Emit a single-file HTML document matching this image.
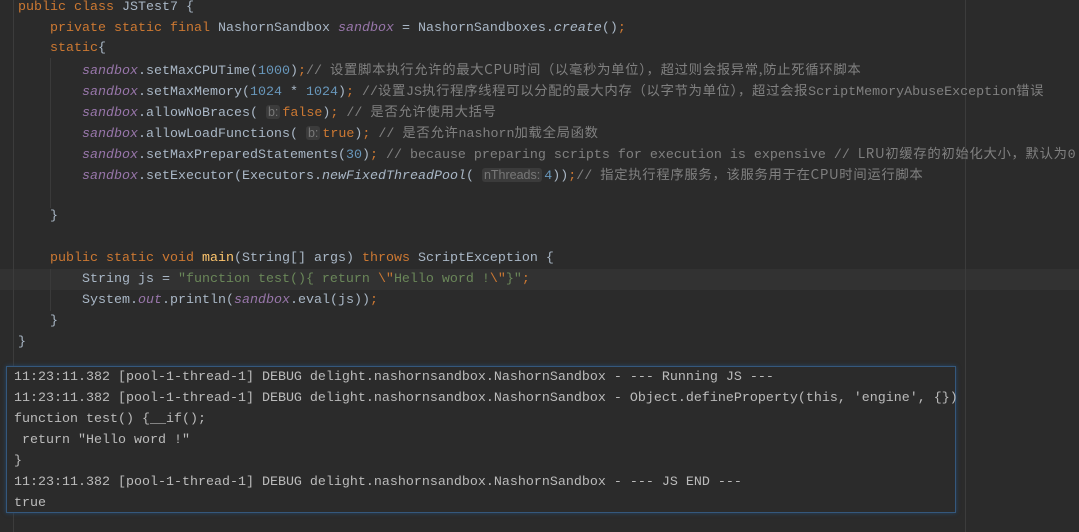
<!DOCTYPE html>
<html><head><meta charset="utf-8"><style>
html,body{margin:0;padding:0;width:1079px;height:532px;overflow:hidden;background:#2b2b2b;}
body{position:relative;font-family:"Liberation Mono","Noto Sans CJK SC",monospace;font-size:13.33px;color:#a9b7c6;}
.l{position:absolute;left:18px;height:21px;line-height:21px;white-space:pre;}
.k{color:#cc7832}.f{color:#9876aa;font-style:italic}.n{color:#6897bb}.c{color:#808080}.s{color:#6a8759}.m{color:#ffc66d}.i{font-style:italic}
.h{background:#3b3b3b;color:#787878;border-radius:3px;padding:0 2px;font-family:"Liberation Sans",sans-serif;font-size:12.5px;margin-right:2px;line-height:14px;display:inline-block}
.zh{font-family:"Noto Sans CJK SC",sans-serif;letter-spacing:0.7px;line-height:10px;}
.cur{position:absolute;left:0;top:269px;width:1079px;height:21px;background:#323232;}
.g{position:absolute;width:1px;background:#3a3a3a;}
.con{position:absolute;left:6px;top:366px;width:948px;height:145px;background:#2b2b2b;border:1px solid #35587c;box-shadow:0 0 4px #24496e;}
.cl{position:absolute;left:7px;height:21px;line-height:21px;white-space:pre;color:#bbbbbb;}
</style></head><body>
<div class="cur"></div>
<div class="g" style="left:13px;top:0;height:532px;background:#3c3c3c"></div>
<div class="g" style="left:965px;top:0;height:532px;background:#3c3c3c"></div>
<div class="g" style="left:50px;top:58px;height:150px"></div>
<div class="g" style="left:50px;top:269px;height:42px"></div>
<div class="l" style="top:-3px"><span class="k">public class </span>JSTest7 {</div>
<div class="l" style="top:18px">    <span class="k">private static final </span>NashornSandbox <span class="f">sandbox</span> = NashornSandboxes.<span class="i">create</span>()<span class="k">;</span></div>
<div class="l" style="top:38px">    <span class="k">static</span>{</div>
<div class="l" style="top:61px">        <span class="f">sandbox</span>.setMaxCPUTime(<span class="n">1000</span>)<span class="k">;</span><span class="c">// <span class="zh">设置脚本执行允许的最大CPU时间（以毫秒为单位），超过则会报异常,防止死循环脚本</span></span></div>
<div class="l" style="top:82px">        <span class="f">sandbox</span>.setMaxMemory(<span class="n">1024</span> * <span class="n">1024</span>)<span class="k">;</span> <span class="c">//<span class="zh">设置</span>JS<span class="zh">执行程序线程可以分配的最大内存（以字节为单位），超过会报</span>ScriptMemoryAbuseException<span class="zh">错误</span></span></div>
<div class="l" style="top:103px">        <span class="f">sandbox</span>.allowNoBraces( <span class="h">b:</span><span class="k">false</span>)<span class="k">;</span> <span class="c">// <span class="zh">是否允许使用大括号</span></span></div>
<div class="l" style="top:124px">        <span class="f">sandbox</span>.allowLoadFunctions( <span class="h">b:</span><span class="k">true</span>)<span class="k">;</span> <span class="c">// <span class="zh">是否允许</span>nashorn<span class="zh">加载全局函数</span></span></div>
<div class="l" style="top:145px">        <span class="f">sandbox</span>.setMaxPreparedStatements(<span class="n">30</span>)<span class="k">;</span> <span class="c">// because preparing scripts for execution is expensive // <span class="zh">LRU初缓存的初始化大小，默认为</span>0</span></div>
<div class="l" style="top:166px">        <span class="f">sandbox</span>.setExecutor(Executors.<span class="i">newFixedThreadPool</span>( <span class="h">nThreads:</span><span class="n">4</span>))<span class="k">;</span><span class="c">// <span class="zh">指定执行程序服务，该服务用于在CPU时间运行脚本</span></span></div>
<div class="l" style="top:206px">    }</div>
<div class="l" style="top:248px">    <span class="k">public static void </span><span class="m">main</span>(String[] args) <span class="k">throws </span>ScriptException {</div>
<div class="l" style="top:269px">        String js = <span class="s">"function test(){ return <span class="k">\"</span>Hello word !<span class="k">\"</span>}"</span><span class="k">;</span></div>
<div class="l" style="top:290px">        System.<span class="f">out</span>.println(<span class="f">sandbox</span>.eval(js))<span class="k">;</span></div>
<div class="l" style="top:311px">    }</div>
<div class="l" style="top:332px">}</div>
<div class="con">
<div class="cl" style="top:0px">11:23:11.382 [pool-1-thread-1] DEBUG delight.nashornsandbox.NashornSandbox - --- Running JS ---</div>
<div class="cl" style="top:21px">11:23:11.382 [pool-1-thread-1] DEBUG delight.nashornsandbox.NashornSandbox - Object.defineProperty(this, 'engine', {})</div>
<div class="cl" style="top:42px">function test() {__if();</div>
<div class="cl" style="top:63px"> return "Hello word !"</div>
<div class="cl" style="top:84px">}</div>
<div class="cl" style="top:105px">11:23:11.382 [pool-1-thread-1] DEBUG delight.nashornsandbox.NashornSandbox - --- JS END ---</div>
<div class="cl" style="top:126px">true</div>
</div>
</body></html>
